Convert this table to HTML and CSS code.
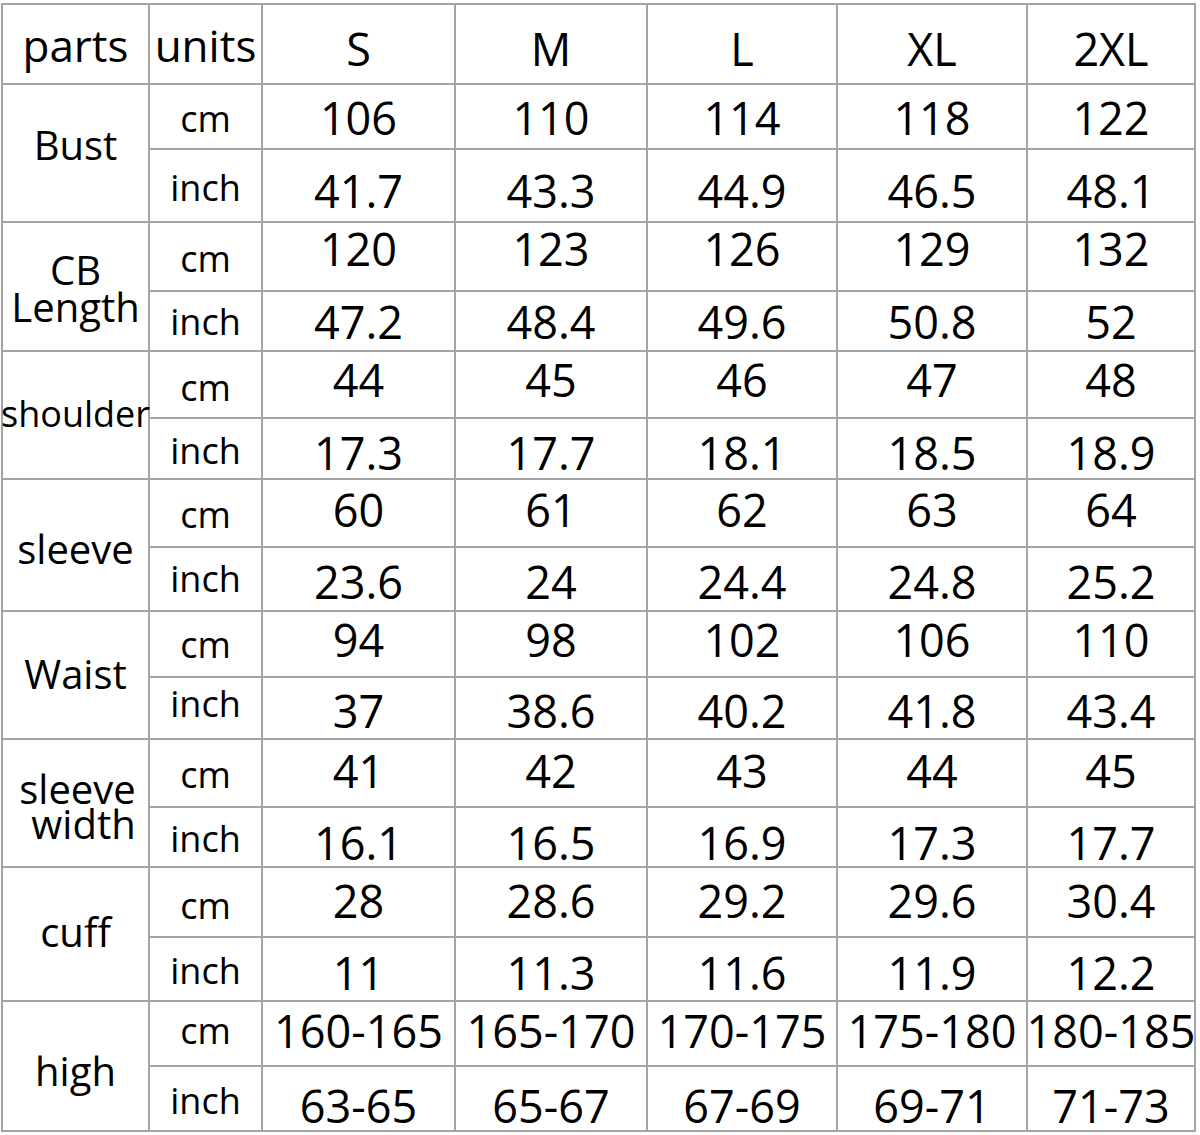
FILE: index.html
```html
<!DOCTYPE html>
<html lang="en">
<head>
<meta charset="utf-8">
<title>Size chart</title>
<link rel="stylesheet" href="styles.css">
</head>
<body>
<div class="chart">
  <div class="row hdr">
    <div class="cell p">parts</div>
    <div class="cell p">units</div>
    <div class="cell v">S</div>
    <div class="cell v">M</div>
    <div class="cell v">L</div>
    <div class="cell v">XL</div>
    <div class="cell v">2XL</div>
  </div>

  <div class="row bust-cm">
    <div class="cell p span2">Bust</div>
    <div class="cell u">cm</div>
    <div class="cell v">106</div><div class="cell v">110</div><div class="cell v">114</div><div class="cell v">118</div><div class="cell v">122</div>
  </div>
  <div class="row bust-in">
    <div class="cell u">inch</div>
    <div class="cell v">41.7</div><div class="cell v">43.3</div><div class="cell v">44.9</div><div class="cell v">46.5</div><div class="cell v">48.1</div>
  </div>

  <div class="row cb-cm">
    <div class="cell p span2 two"><span class="ln">CB</span><span class="ln">Length</span></div>
    <div class="cell u">cm</div>
    <div class="cell v">120</div><div class="cell v">123</div><div class="cell v">126</div><div class="cell v">129</div><div class="cell v">132</div>
  </div>
  <div class="row cb-in">
    <div class="cell u">inch</div>
    <div class="cell v">47.2</div><div class="cell v">48.4</div><div class="cell v">49.6</div><div class="cell v">50.8</div><div class="cell v">52</div>
  </div>

  <div class="row sh-cm">
    <div class="cell p span2 small">shoulder</div>
    <div class="cell u">cm</div>
    <div class="cell v">44</div><div class="cell v">45</div><div class="cell v">46</div><div class="cell v">47</div><div class="cell v">48</div>
  </div>
  <div class="row sh-in">
    <div class="cell u">inch</div>
    <div class="cell v">17.3</div><div class="cell v">17.7</div><div class="cell v">18.1</div><div class="cell v">18.5</div><div class="cell v">18.9</div>
  </div>

  <div class="row sl-cm">
    <div class="cell p span2">sleeve</div>
    <div class="cell u">cm</div>
    <div class="cell v">60</div><div class="cell v">61</div><div class="cell v">62</div><div class="cell v">63</div><div class="cell v">64</div>
  </div>
  <div class="row sl-in">
    <div class="cell u">inch</div>
    <div class="cell v">23.6</div><div class="cell v">24</div><div class="cell v">24.4</div><div class="cell v">24.8</div><div class="cell v">25.2</div>
  </div>

  <div class="row wa-cm">
    <div class="cell p span2">Waist</div>
    <div class="cell u">cm</div>
    <div class="cell v">94</div><div class="cell v">98</div><div class="cell v">102</div><div class="cell v">106</div><div class="cell v">110</div>
  </div>
  <div class="row wa-in">
    <div class="cell u">inch</div>
    <div class="cell v">37</div><div class="cell v">38.6</div><div class="cell v">40.2</div><div class="cell v">41.8</div><div class="cell v">43.4</div>
  </div>

  <div class="row sw-cm">
    <div class="cell p span2 two sw"><span class="ln first">sleeve</span><span class="ln second">width</span></div>
    <div class="cell u">cm</div>
    <div class="cell v">41</div><div class="cell v">42</div><div class="cell v">43</div><div class="cell v">44</div><div class="cell v">45</div>
  </div>
  <div class="row sw-in">
    <div class="cell u">inch</div>
    <div class="cell v">16.1</div><div class="cell v">16.5</div><div class="cell v">16.9</div><div class="cell v">17.3</div><div class="cell v">17.7</div>
  </div>

  <div class="row cu-cm">
    <div class="cell p span2">cuff</div>
    <div class="cell u">cm</div>
    <div class="cell v">28</div><div class="cell v">28.6</div><div class="cell v">29.2</div><div class="cell v">29.6</div><div class="cell v">30.4</div>
  </div>
  <div class="row cu-in">
    <div class="cell u">inch</div>
    <div class="cell v">11</div><div class="cell v">11.3</div><div class="cell v">11.6</div><div class="cell v">11.9</div><div class="cell v">12.2</div>
  </div>

  <div class="row hi-cm">
    <div class="cell p span2">high</div>
    <div class="cell u">cm</div>
    <div class="cell v">160-165</div><div class="cell v">165-170</div><div class="cell v">170-175</div><div class="cell v">175-180</div><div class="cell v">180-185</div>
  </div>
  <div class="row hi-in">
    <div class="cell u">inch</div>
    <div class="cell v">63-65</div><div class="cell v">65-67</div><div class="cell v">67-69</div><div class="cell v">69-71</div><div class="cell v">71-73</div>
  </div>
</div>
</body>
</html>
```

FILE: styles.css
```css
html, body {
  margin: 0;
  padding: 0;
  background: #ffffff;
}

body {
  font-family: "Open Sans", "Noto Sans", "DejaVu Sans", sans-serif;
  color: #000000;
}

.chart {
  display: grid;
  grid-template-columns: 145px 111px 191px 190px 188px 188px 166px;
  grid-template-rows: 78px 63px 71px 67px 58px 65px 59px 66px 62px 64px 60px 66px 58px 68px 62px 63px 63px;
  gap: 2px;
  padding: 2px;
  width: max-content;
  margin: 3px 0 0 1px;
  background: #a4a4a4;
}

.row {
  display: contents;
}

.cell {
  background: #ffffff;
  display: flex;
  align-items: center;
  justify-content: center;
  white-space: nowrap;
  line-height: 1;
  box-sizing: border-box;
  min-height: 0;
}

.v {
  font-size: 45px;
}

.u {
  font-size: 36px;
}

.p {
  font-size: 40px;
}

.span2 {
  grid-row: span 2;
}

.small {
  font-size: 36px;
}

.two {
  flex-direction: column;
  line-height: 37px;
}

.two .ln {
  display: block;
}

.sw {
  line-height: 35px;
}

.sw .first {
  padding-left: 4px;
}

.sw .second {
  padding-left: 16px;
}

/* header */
.hdr > .v { padding-top: 9px; }
.hdr > .p { font-size: 44px; padding-top: 1px; }

/* Bust */
.bust-cm > .v { padding-top: 2px; }
.bust-cm > .u { padding-top: 4px; }
.bust-cm > .p { padding-bottom: 16px; }
.bust-in > .v { padding-top: 9px; }
.bust-in > .u { padding-top: 4px; }

/* CB Length */
.cb-cm > .v { padding-bottom: 17px; }
.cb-cm > .u { padding-top: 5px; }
.cb-cm > .p { padding-top: 3px; }
.cb-in > .v { padding-top: 1px; }
.cb-in > .u { padding-top: 1px; }

/* shoulder */
.sh-cm > .v { padding-bottom: 11px; }
.sh-cm > .u { padding-top: 7px; }
.sh-cm > .p { padding-bottom: 2px; }
.sh-in > .v { padding-top: 7px; }
.sh-in > .u { padding-top: 4px; }

/* sleeve */
.sl-cm > .v { padding-bottom: 7px; }
.sl-cm > .u { padding-top: 4px; }
.sl-cm > .p { padding-top: 7px; }
.sl-in > .v { padding-top: 5px; }

/* Waist */
.wa-cm > .v { padding-bottom: 9px; }
.wa-cm > .u { padding-top: 1px; }
.wa-cm > .p { padding-bottom: 2px; }
.wa-in > .v { padding-top: 4px; }
.wa-in > .u { padding-bottom: 9px; }

/* sleeve width */
.sw-cm > .v { padding-bottom: 5px; }
.sw-cm > .u { padding-top: 4px; }
.sw-cm > .p { padding-top: 5px; }
.sw-in > .v { padding-top: 11px; }
.sw-in > .u { padding-top: 3px; }

/* cuff */
.cu-cm > .v { padding-bottom: 4px; }
.cu-cm > .u { padding-top: 8px; }
.cu-cm > .p { padding-bottom: 4px; }
.cu-in > .v { padding-top: 7px; }
.cu-in > .u { padding-top: 3px; }

/* high */
.hi-cm > .v { padding-bottom: 7px; }
.hi-cm > .u { padding-bottom: 6px; }
.hi-cm > .p { padding-top: 10px; }
.hi-in > .v { padding-top: 13px; }
.hi-in > .u { padding-top: 4px; }
```
